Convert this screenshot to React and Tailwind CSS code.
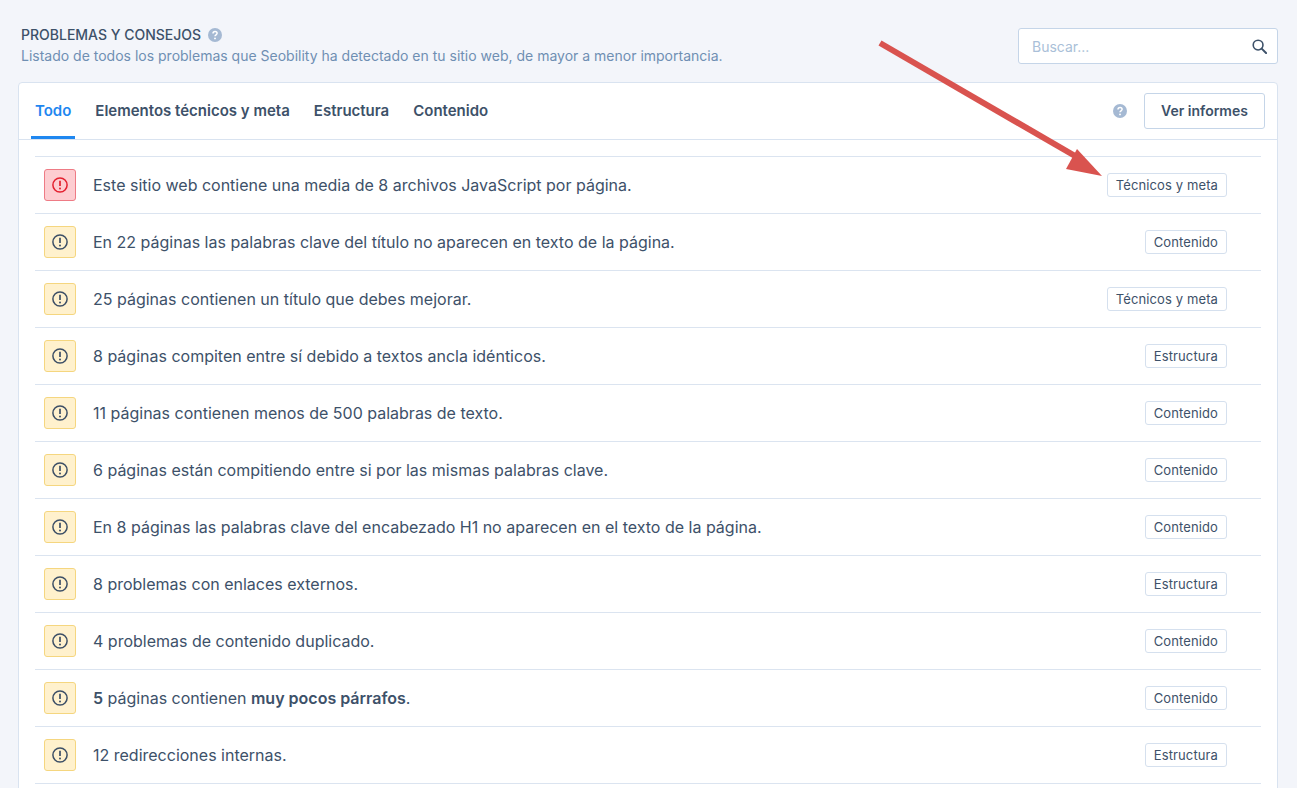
const problems = [
  { level: 'error', text: 'Este sitio web contiene una media de 8 archivos JavaScript por página.', tag: 'Técnicos y meta' },
  { text: 'En 22 páginas las palabras clave del título no aparecen en texto de la página.', tag: 'Contenido' },
  { text: '25 páginas contienen un título que debes mejorar.', tag: 'Técnicos y meta' },
  { text: '8 páginas compiten entre sí debido a textos ancla idénticos.', tag: 'Estructura' },
  { text: '11 páginas contienen menos de 500 palabras de texto.', tag: 'Contenido' },
  { text: '6 páginas están compitiendo entre si por las mismas palabras clave.', tag: 'Contenido' },
  { text: 'En 8 páginas las palabras clave del encabezado H1 no aparecen en el texto de la página.', tag: 'Contenido' },
  { text: '8 problemas con enlaces externos.', tag: 'Estructura' },
  { text: '4 problemas de contenido duplicado.', tag: 'Contenido' },
  {
    text: (
      <>
        <b className="font-semibold">5</b> páginas contienen <b className="font-semibold">muy pocos párrafos</b>.
      </>
    ),
    tag: 'Contenido'
  },
  { text: '12 redirecciones internas.', tag: 'Estructura' }
]

function HelpIcon({ className }) {
  return (
    <svg viewBox="0 0 14 14" className={className}>
      <circle cx="7" cy="7" r="7" fill="#a5b9d3" />
      <path d="M5 5.4c0-1.2 1-1.9 2.1-1.9S9.1 4.2 9.1 5.3c0 1.5-2.1 1.5-2.1 3" fill="none" stroke="#fff" strokeWidth="1.5" />
      <circle cx="7" cy="10.4" r="0.95" fill="#fff" />
    </svg>
  )
}

function AlertIcon({ className }) {
  return (
    <svg viewBox="0 0 16 16" fill="none" className={className}>
      <circle cx="8" cy="8" r="7.1" stroke="currentColor" strokeWidth="1.5" />
      <path d="M8 3.8v5.2" stroke="currentColor" strokeWidth="1.7" />
      <circle cx="8" cy="11.4" r="1" fill="currentColor" />
    </svg>
  )
}

function SearchIcon({ className }) {
  return (
    <svg viewBox="0 0 16 16" fill="none" stroke="currentColor" className={className}>
      <circle cx="6.5" cy="6.5" r="5.2" strokeWidth="1.7" />
      <path d="M10.3 10.3 L15 15" strokeWidth="2.1" strokeLinecap="round" />
    </svg>
  )
}

function ProblemRow({ level, text, tag }) {
  const isError = level === 'error'
  return (
    <div className="flex h-[57px] items-center border-b border-[#dbe4f0] pl-[9px] pr-[34px]">
      <div
        className={
          isError
            ? 'flex h-8 w-8 shrink-0 items-center justify-center rounded-[3px] border border-[#ee7b85] bg-[#fdcdd1] text-[#e3202f]'
            : 'flex h-8 w-8 shrink-0 items-center justify-center rounded-[3px] border border-[#f5d67f] bg-[#fff1cd] text-[#3d4f66]'
        }
      >
        <AlertIcon className="h-4 w-4" />
      </div>
      <div className="ml-[17px] flex-1 text-[16px] leading-6 text-[#3d5169]">{text}</div>
      <span className="rounded-[3px] border border-[#d5e0ee] bg-white px-2 py-[3px] text-[13px] leading-4 tracking-[0.12px] text-[#3d5169]">
        {tag}
      </span>
    </div>
  )
}

export default function App() {
  return (
    <div className="relative h-screen overflow-hidden bg-[#f3f5fa] font-['Inter',sans-serif]">
      {/* Header */}
      <div className="flex items-start justify-between pl-[21px] pr-[19px] pt-[28px]">
        <div>
          <div className="flex items-center gap-[7px] text-[14px] leading-[14px] font-medium text-[#3d5169]">
            PROBLEMAS Y CONSEJOS
            <HelpIcon className="h-[14px] w-[14px]" />
          </div>
          <p className="mt-[6px] text-[14px] leading-[16px] text-[#6f8fb3]">
            Listado de todos los problemas que Seobility ha detectado en tu sitio web, de mayor a menor importancia.
          </p>
        </div>
        <div className="flex h-9 w-[260px] items-center justify-between rounded-[3px] border border-[#c5d5e8] bg-white pl-[13px] pr-[10px]">
          <span className="text-[14px] text-[#aabfd8]">Buscar...</span>
          <SearchIcon className="h-[15px] w-[15px] text-[#3d5169]" />
        </div>
      </div>

      {/* Card */}
      <div className="ml-[18px] mr-[19px] mt-[18px] rounded-t-[4px] border border-[#d9e3f0] bg-white">
        <div className="flex h-[57px] items-stretch justify-between border-b border-[#d9e3f0] pl-[12px] pr-[12px]">
          <div className="flex text-[15px] font-semibold text-[#3d5169]">
            <div className="flex items-center border-b-[3px] border-[#1f87f0] px-[4px] pt-[3px] text-[#1f87f0]">Todo</div>
            <div className="ml-[20px] flex items-center">Elementos técnicos y meta</div>
            <div className="ml-[24px] flex items-center">Estructura</div>
            <div className="ml-[24px] flex items-center">Contenido</div>
          </div>
          <div className="flex items-center gap-[17px]">
            <HelpIcon className="h-[14px] w-[14px]" />
            <button className="h-9 w-[121px] rounded-[3px] border border-[#c5d5e8] bg-white pb-[1px] text-[14px] font-semibold text-[#3d5169]">
              Ver informes
            </button>
          </div>
        </div>

        <div className="mx-[16px] mt-[16px] border-t border-[#dbe4f0]">
          {problems.map((p, i) => (
            <ProblemRow key={i} {...p} />
          ))}
        </div>
        <div className="h-[57px]" />
      </div>

      {/* Annotation arrow */}
      <svg className="absolute left-0 top-0 h-[788px] w-[1297px]" viewBox="0 0 1297 788">
        <path d="M880 43 L1082 160" stroke="#d9534f" strokeWidth="6" fill="none" />
        <path d="M1077 149 L1066 169 L1102 176 Z" fill="#d9534f" />
      </svg>
    </div>
  )
}
